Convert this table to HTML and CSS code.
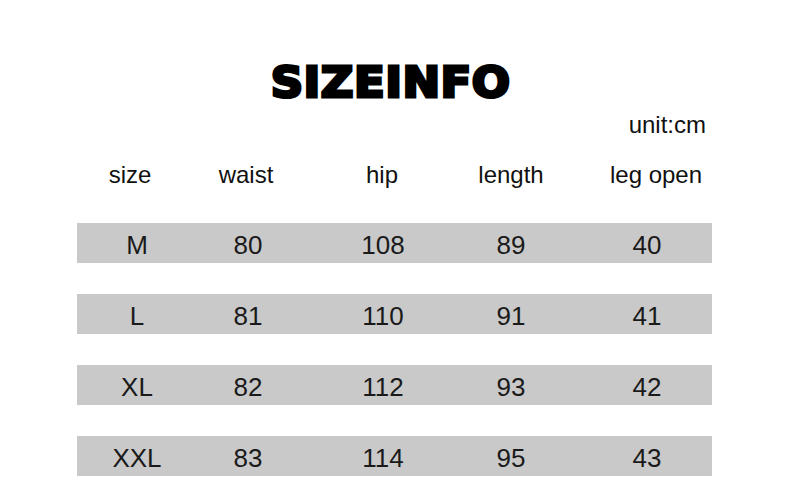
FILE: index.html
```html
<!DOCTYPE html>
<html>
<head>
<meta charset="utf-8">
<link rel="stylesheet" href="styles.css">
</head>
<body>
<div class="page">
  <h1 class="title">SIZEINFO</h1>
  <div class="unit">unit:cm</div>
  <div class="table">
    <div class="head">
      <span>size</span><span>waist</span><span>hip</span><span>length</span><span>leg open</span>
    </div>
    <div class="rows">
      <div class="bar"><span>M</span><span>80</span><span>108</span><span>89</span><span>40</span></div>
      <div class="bar"><span>L</span><span>81</span><span>110</span><span>91</span><span>41</span></div>
      <div class="bar"><span>XL</span><span>82</span><span>112</span><span>93</span><span>42</span></div>
      <div class="bar"><span>XXL</span><span>83</span><span>114</span><span>95</span><span>43</span></div>
    </div>
  </div>
</div>
</body>
</html>
```

FILE: styles.css
```css
html, body {
  margin: 0;
  padding: 0;
  background: #ffffff;
}
.page {
  width: 790px;
  height: 502px;
  overflow: hidden;
  font-family: "Liberation Sans", Arial, sans-serif;
  color: #111;
  padding-top: 61px;
  box-sizing: border-box;
}
.title {
  margin: 0 0 0 2px;
  padding-right: 10px;
  text-align: center;
  font-family: "DejaVu Sans", sans-serif;
  font-weight: 900;
  font-size: 42px;
  line-height: 44px;
  letter-spacing: 0.5px;
  color: #000;
  -webkit-text-stroke: 3px #000;
  transform: scaleX(1.07);
}
.unit {
  margin-top: 6px;
  width: 706px;
  text-align: right;
  font-size: 24px;
  line-height: 28px;
}
.table {
  margin-left: 77px;
  width: 635px;
}
.head {
  margin-top: 22px;
  display: grid;
  grid-template-columns: 106px 126px 146px 112px 178px;
  font-size: 24px;
  line-height: 28px;
}
.head span, .bar span {
  text-align: center;
  white-space: nowrap;
}
.rows {
  margin-top: 34px;
  display: flex;
  flex-direction: column;
  gap: 31px;
}
.bar {
  height: 40px;
  box-sizing: border-box;
  padding-top: 3px;
  background: #c9c9c9;
  display: grid;
  grid-template-columns: 120px 102px 168px 88px 184px;
  font-size: 26px;
  line-height: 38px;
  color: #1a1a1a;
}
```
